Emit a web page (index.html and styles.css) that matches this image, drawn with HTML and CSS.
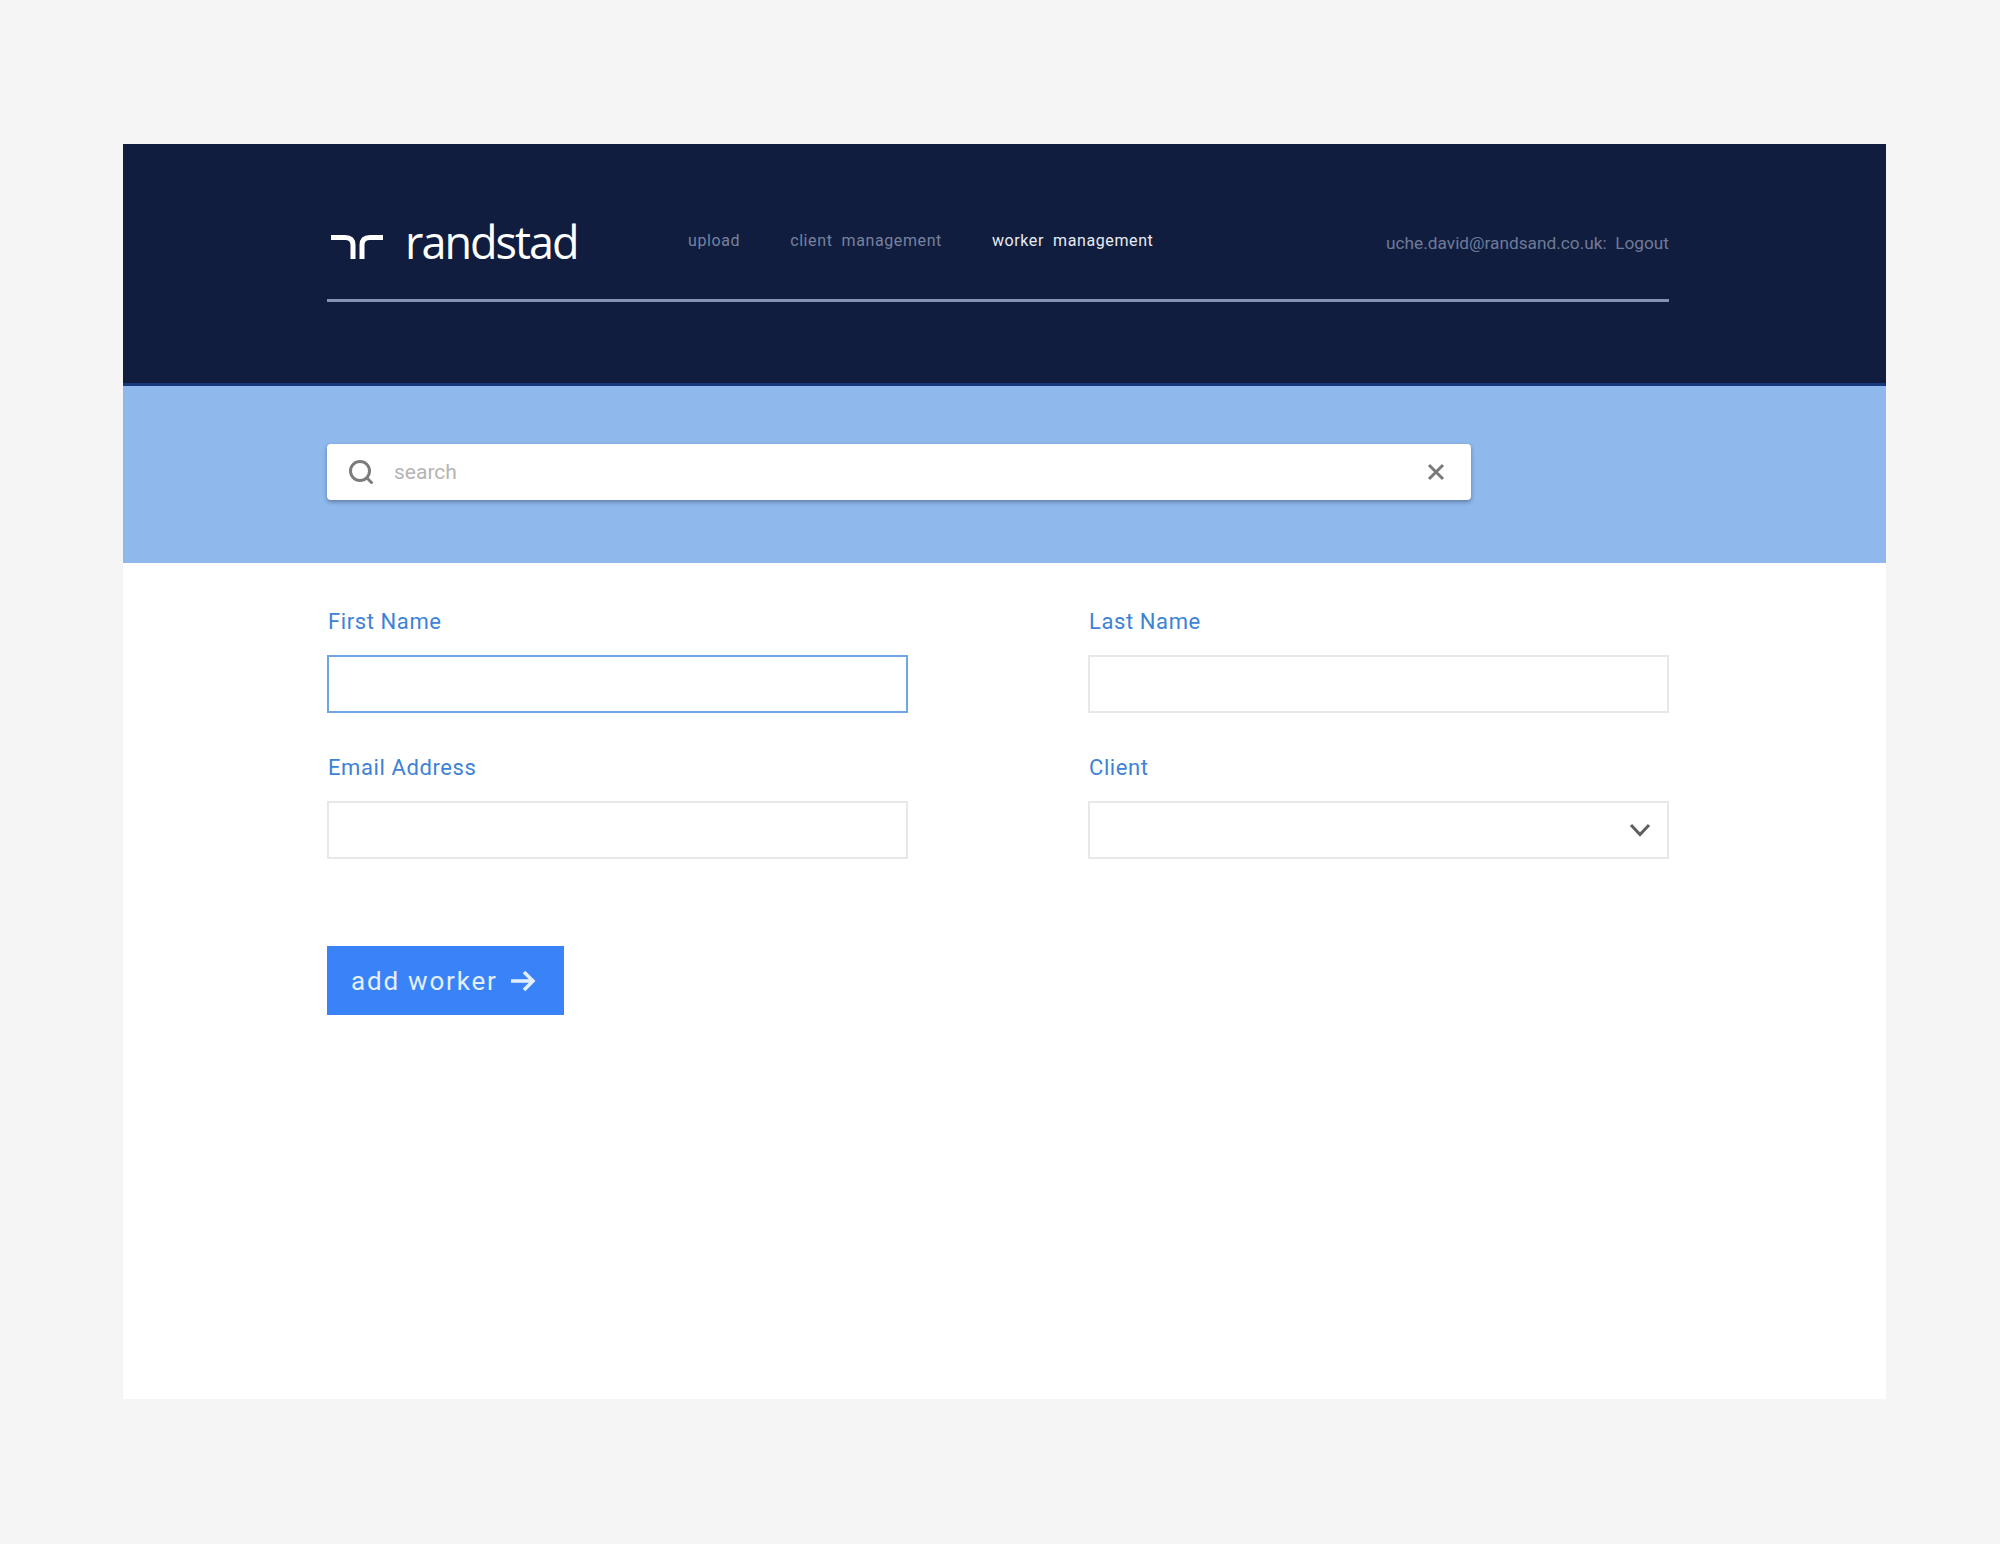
FILE: index.html
```html
<!DOCTYPE html>
<html lang="en">
<head>
<meta charset="utf-8">
<title>randstad - worker management</title>
<link rel="stylesheet" href="styles.css">
</head>
<body>
<main class="card">
  <header class="top">
    <div class="top-inner">
      <a class="logo">
        <svg class="logo-mark" width="54" height="28" viewBox="0 0 54 28" aria-hidden="true">
          <path d="M1 4.500H15Q23 4.500 23 12V26" />
          <path d="M53 4.500H40Q32 4.500 32 12V26" />
        </svg>
        <span class="logo-text">randstad</span>
      </a>
      <nav class="nav">
        <a>upload</a>
        <a>client&nbsp; management</a>
        <a class="active">worker&nbsp; management</a>
      </nav>
      <div class="user">uche.david@randsand.co.uk:&nbsp; Logout</div>
    </div>
  </header>
  <section class="search-band">
    <div class="search">
      <svg class="search-icon" width="24" height="24" viewBox="0 0 24 24" aria-hidden="true">
        <circle cx="11" cy="11" r="9.500"/>
        <path d="M17.500 17.500L23.500 23.500"/>
      </svg>
      <span class="placeholder">search</span>
      <svg class="clear-icon" width="18" height="18" viewBox="0 0 18 18" aria-hidden="true">
        <path d="M2 2L16 16M16 2L2 16"/>
      </svg>
    </div>
  </section>
  <form class="form">
    <div class="grid">
      <div class="field">
        <label class="label">First Name</label>
        <div class="input focus"></div>
      </div>
      <div class="field">
        <label class="label">Last Name</label>
        <div class="input"></div>
      </div>
      <div class="field">
        <label class="label">Email Address</label>
        <div class="input"></div>
      </div>
      <div class="field">
        <label class="label">Client</label>
        <div class="input select">
          <svg class="chevron" width="22" height="14" viewBox="0 0 22 14" aria-hidden="true">
            <path d="M2 2L11 11.500L20 2"/>
          </svg>
        </div>
      </div>
    </div>
    <button class="btn" type="button">
      <span>add worker</span>
      <svg class="arrow" width="26" height="24" viewBox="0 0 26 24" aria-hidden="true">
        <path d="M1 12H23M14 3L23 12L14 21"/>
      </svg>
    </button>
  </form>
</main>
</body>
</html>
```
FILE: styles.css
```css
* { box-sizing: border-box; }
html, body { margin: 0; padding: 0; }
body {
  background: #f5f5f5;
  font-family: Roboto, "Liberation Sans", sans-serif;
  height: 1544px;
  padding: 144px 0 0 122.500px;
}
.card {
  width: 1763.500px;
  height: 1255px;
  background: #fff;
}
.top {
  height: 242px;
  background: #101d3e;
  border-bottom: 3px solid #17387a;
  padding: 72px 217px 0 204.500px;
}
.top-inner {
  height: 86px;
  border-bottom: 3px solid #8592b3;
  display: flex;
  align-items: flex-start;
}
.logo {
  display: flex;
  align-items: flex-start;
  width: 361px;
  flex: none;
  color: #fff;
}
.logo-mark {
  margin: 17px 0 0 3px;
  flex: none;
}
.logo-mark path {
  fill: none;
  stroke: #fff;
  stroke-width: 5;
}
.logo-text {
  font-family: "Open Sans", sans-serif;
  font-size: 45px;
  line-height: 60px;
  letter-spacing: -2px;
  margin-left: 21px;
  margin-top: -4px;
}
.nav {
  display: flex;
  gap: 50px;
  font-size: 16px;
  line-height: 20px;
  letter-spacing: 0.600px;
  color: #77829f;
  padding-top: 15px;
  white-space: nowrap;
}
.nav .active { color: #e8ebf2; }
.user {
  margin-left: auto;
  font-size: 17.250px;
  line-height: 20px;
  color: #6f7a98;
  padding-top: 17px;
  white-space: nowrap;
}
.search-band {
  height: 177px;
  background: #8fb8ec;
  padding: 58px 0 0 204.500px;
}
.search {
  width: 1144px;
  height: 56px;
  background: #fff;
  border-radius: 4px;
  box-shadow: 0 2px 4px rgba(40, 50, 80, .45);
  display: flex;
  align-items: center;
  padding: 0 26px 0 22px;
}
.search-icon { flex: none; }
.search-icon circle, .search-icon path {
  fill: none;
  stroke: #7c7c7c;
  stroke-width: 3;
}
.placeholder {
  font-size: 21px;
  color: #b4b4b4;
  margin-left: 21px;
  flex: 1;
}
.clear-icon path {
  fill: none;
  stroke: #7a7a7a;
  stroke-width: 3;
}
.form { padding: 0 217px 0 204.500px; }
.grid {
  display: grid;
  grid-template-columns: 581px 581px;
  column-gap: 180px;
  row-gap: 40px;
  padding-top: 44px;
}
.field { display: flex; flex-direction: column; }
.label {
  font-size: 22px;
  line-height: 30px;
  letter-spacing: 0.600px;
  color: #3e82d6;
  padding-left: 1px;
  margin-bottom: 18px;
}
.input {
  height: 58px;
  border: 2px solid #e8e8e8;
  background: #fff;
}
.input.focus { border-color: #6fa5e6; }
.select {
  display: flex;
  align-items: center;
  justify-content: flex-end;
  padding-right: 16px;
}
.chevron path {
  fill: none;
  stroke: #5f5f5f;
  stroke-width: 3;
}
.btn {
  margin-top: 87px;
  width: 237px;
  height: 69px;
  border: 0;
  background: #3a82f7;
  color: #e4effd;
  font-family: Roboto, sans-serif;
  font-size: 26px;
  letter-spacing: 1.800px;
  display: flex;
  align-items: center;
  gap: 12px;
  padding: 0 0 0 24px;
}
.arrow path {
  fill: none;
  stroke: #e4effd;
  stroke-width: 3.500;
}
```
